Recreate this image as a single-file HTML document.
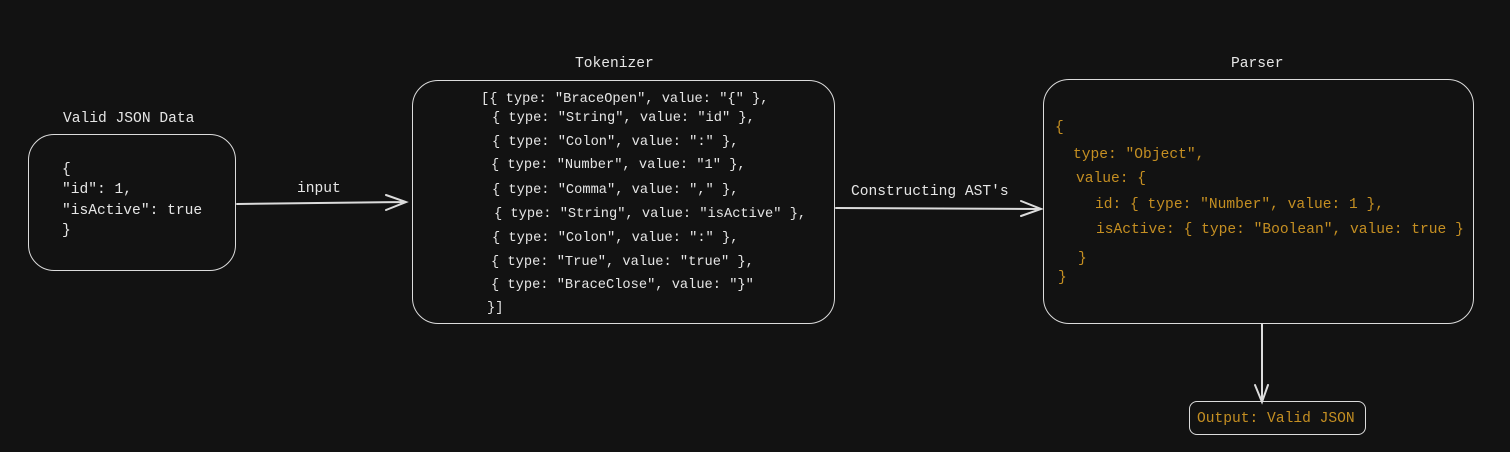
<!DOCTYPE html>
<html><head><meta charset="utf-8"><style>
html,body{margin:0;padding:0;background:#121212;}
body{width:1510px;height:452px;position:relative;overflow:hidden;font-family:"Liberation Mono",monospace;color:#e6e6e6;}
.t{position:absolute;white-space:pre;line-height:16px;}
.b{position:absolute;border:1.8px solid #dcdcdc;box-sizing:border-box;}
.s{font-size:14.6px;}
.k{font-size:13.7px;}
.o{color:#c58f22;font-size:14.6px;}
</style></head><body>
<div class="b" style="left:28px;top:134px;width:208px;height:137px;border-radius:26px"></div>
<div class="b" style="left:412px;top:80px;width:423px;height:244px;border-radius:26px"></div>
<div class="b" style="left:1043px;top:79px;width:431px;height:245px;border-radius:26px"></div>
<div class="b" style="left:1189px;top:401px;width:177px;height:34px;border-radius:8px"></div>
<svg width="1510" height="452" style="position:absolute;left:0;top:0" fill="none" stroke="#dcdcdc" stroke-width="2" stroke-linecap="round">
<path d="M237 204 L406 202 M386 195 L406 202 L386 210"/>
<path d="M836 208 L1041 209 M1021 201 L1041 209 L1021 216"/>
<path d="M1262 324 L1262 402 M1255 385 L1262 402 L1268 385"/>
</svg>
<div class="t s" style="left:63px;top:111px">Valid JSON Data</div>
<div class="t s" style="left:62px;top:160px;line-height:20.3px">{
"id": 1,
"isActive": true
}</div>
<div class="t s" style="left:297px;top:181px">input</div>
<div class="t s" style="left:575px;top:56px">Tokenizer</div>
<div class="t k" style="left:481px;top:92px">[{ type: "BraceOpen", value: "{" },</div>
<div class="t k" style="left:492px;top:111px">{ type: "String", value: "id" },</div>
<div class="t k" style="left:492px;top:135px">{ type: "Colon", value: ":" },</div>
<div class="t k" style="left:491px;top:158px">{ type: "Number", value: "1" },</div>
<div class="t k" style="left:492px;top:183px">{ type: "Comma", value: "," },</div>
<div class="t k" style="left:494px;top:207px">{ type: "String", value: "isActive" },</div>
<div class="t k" style="left:492px;top:231px">{ type: "Colon", value: ":" },</div>
<div class="t k" style="left:491px;top:255px">{ type: "True", value: "true" },</div>
<div class="t k" style="left:491px;top:278px">{ type: "BraceClose", value: "}"</div>
<div class="t k" style="left:487px;top:301px">}]</div>
<div class="t s" style="left:851px;top:184px">Constructing AST's</div>
<div class="t s" style="left:1231px;top:56px">Parser</div>
<div class="t o" style="left:1055px;top:120px">{</div>
<div class="t o" style="left:1073px;top:147px">type: "Object",</div>
<div class="t o" style="left:1076px;top:171px">value: {</div>
<div class="t o" style="left:1095px;top:197px">id: { type: "Number", value: 1 },</div>
<div class="t o" style="left:1096px;top:222px">isActive: { type: "Boolean", value: true }</div>
<div class="t o" style="left:1078px;top:251px">}</div>
<div class="t o" style="left:1058px;top:270px">}</div>
<div class="t o" style="left:1197px;top:411px">Output: Valid JSON</div>
</body></html>
